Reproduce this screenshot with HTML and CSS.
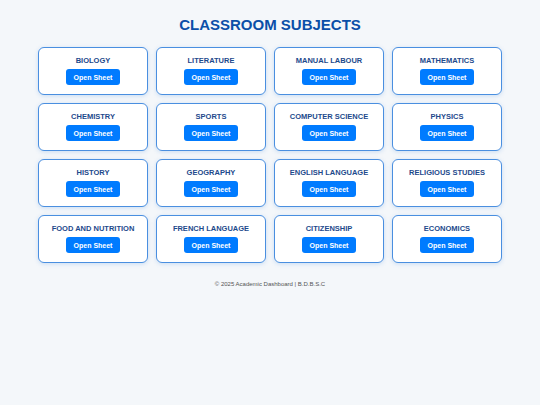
FILE: index.html
```html
<!DOCTYPE html>
<html>
<head>
<meta charset="utf-8">
<link rel="stylesheet" href="styles.css">
</head>
<body>
<h1 class="title">CLASSROOM SUBJECTS</h1>
<div class="grid">
  <div class="card"><div class="name">BIOLOGY</div><button class="btn">Open Sheet</button></div>
  <div class="card"><div class="name">LITERATURE</div><button class="btn">Open Sheet</button></div>
  <div class="card"><div class="name">MANUAL LABOUR</div><button class="btn">Open Sheet</button></div>
  <div class="card"><div class="name">MATHEMATICS</div><button class="btn">Open Sheet</button></div>
  <div class="card"><div class="name">CHEMISTRY</div><button class="btn">Open Sheet</button></div>
  <div class="card"><div class="name">SPORTS</div><button class="btn">Open Sheet</button></div>
  <div class="card"><div class="name">COMPUTER SCIENCE</div><button class="btn">Open Sheet</button></div>
  <div class="card"><div class="name">PHYSICS</div><button class="btn">Open Sheet</button></div>
  <div class="card"><div class="name">HISTORY</div><button class="btn">Open Sheet</button></div>
  <div class="card"><div class="name">GEOGRAPHY</div><button class="btn">Open Sheet</button></div>
  <div class="card"><div class="name">ENGLISH LANGUAGE</div><button class="btn">Open Sheet</button></div>
  <div class="card"><div class="name">RELIGIOUS STUDIES</div><button class="btn">Open Sheet</button></div>
  <div class="card"><div class="name">FOOD AND NUTRITION</div><button class="btn">Open Sheet</button></div>
  <div class="card"><div class="name">FRENCH LANGUAGE</div><button class="btn">Open Sheet</button></div>
  <div class="card"><div class="name">CITIZENSHIP</div><button class="btn">Open Sheet</button></div>
  <div class="card"><div class="name">ECONOMICS</div><button class="btn">Open Sheet</button></div>
</div>
<footer class="footer">© 2025 Academic Dashboard | B.D.B.S.C</footer>
</body>
</html>
```
FILE: styles.css
```css
html, body {
  margin: 0;
  padding: 0;
  background: #f4f7fa;
  font-family: "Liberation Sans", Arial, sans-serif;
}
body {
  padding-top: 15px;
}
.title {
  margin: 0 0 12px;
  text-align: center;
  font-size: 15px;
  line-height: 20px;
  font-weight: bold;
  color: #0b4fa8;
}
.grid {
  width: 464px;
  margin: 0 auto;
  display: grid;
  grid-template-columns: repeat(4, 1fr);
  gap: 8px;
}
.card {
  box-sizing: border-box;
  height: 48px;
  background: #ffffff;
  border: 1.5px solid #4a8fe0;
  border-radius: 6px;
  box-shadow: 0 1px 4px rgba(74, 143, 224, 0.25);
  display: flex;
  flex-direction: column;
  align-items: center;
  padding-top: 8px;
}
.name {
  font-size: 7.5px;
  line-height: 10px;
  font-weight: bold;
  color: #1d4a8c;
  margin-bottom: 3px;
}
.btn {
  border: none;
  background: #007bff;
  color: #ffffff;
  font-family: "Liberation Sans", Arial, sans-serif;
  font-size: 7px;
  font-weight: bold;
  height: 16px;
  width: 54px;
  padding: 0;
  border-radius: 3px;
}
.footer {
  margin-top: 18px;
  text-align: center;
  font-size: 6px;
  color: #555;
}
```
